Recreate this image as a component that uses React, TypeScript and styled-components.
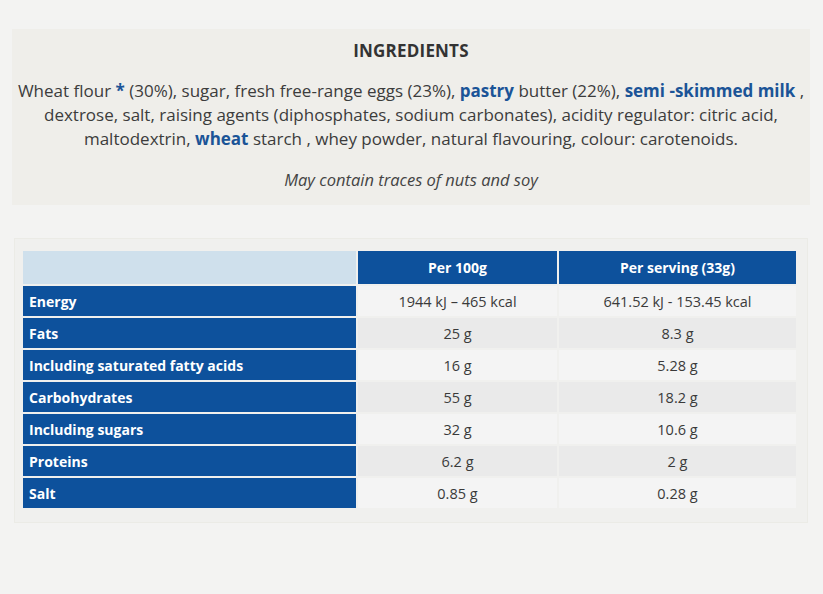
import React from "react";
import styled, { createGlobalStyle } from "styled-components";

const Global = createGlobalStyle`
  html, body { margin: 0; padding: 0; background: #f3f3f2; }
  body { font-family: "Open Sans", "Liberation Sans", sans-serif; color: #3a3a3a; }
`;

const Page = styled.div`
  width: 823px;
  height: 594px;
  padding: 29px 0 0 12px;
  box-sizing: border-box;
  display: flex;
  flex-direction: column;
  gap: 33px;
`;

const IngredientsBox = styled.section`
  width: 798px;
  height: 176px;
  box-sizing: border-box;
  background: #efeeea;
  padding: 10px 0 0;
  display: flex;
  flex-direction: column;
  align-items: center;
  text-align: center;
`;

const Title = styled.h2`
  margin: 0;
  font-size: 17px;
  font-weight: 700;
  color: #333;
  line-height: 24px;
  letter-spacing: 0.2px;
`;

const Paragraph = styled.p`
  margin: 16px 0 0;
  font-size: 17px;
  line-height: 24px;
  color: #3c3c3c;
  white-space: nowrap;
`;

const Allergen = styled.strong`
  color: #1b5497;
  font-weight: 700;
`;

const Traces = styled.p`
  margin: 17px 0 0;
  font-size: 16.5px;
  font-style: italic;
  line-height: 24px;
  color: #444;
`;

const TableBox = styled.section`
  margin-left: 2px;
  width: 794px;
  height: 285px;
  box-sizing: border-box;
  background: #f0f0ee;
  border: 1px solid #ebebe6;
  padding: 12px 0 0 8px;
`;

const Grid = styled.div`
  display: grid;
  grid-template-columns: 333px 199px 237px;
  grid-template-rows: 33px;
  grid-auto-rows: 30px;
  gap: 2px;
`;

const Cell = styled.div<{ $kind: "blank" | "head" | "label" | "value"; $alt?: boolean }>`
  display: flex;
  align-items: center;
  font-size: 14px;
  box-sizing: border-box;
  ${({ $kind, $alt }) => {
    switch ($kind) {
      case "blank":
        return `background: #cfe0ec;`;
      case "head":
        return `background: #0d519c; color: #fff; font-weight: 700; justify-content: center;`;
      case "label":
        return `background: #0d519c; color: #fff; font-weight: 700; padding-left: 6px;`;
      default:
        return `background: ${$alt ? "#eaeaea" : "#f4f4f4"}; color: #3a3a3a; justify-content: center; font-size: 14.5px;`;
    }
  }}
`;

const rows: [string, string, string][] = [
  ["Energy", "1944 kJ – 465 kcal", "641.52 kJ - 153.45 kcal"],
  ["Fats", "25 g", "8.3 g"],
  ["Including saturated fatty acids", "16 g", "5.28 g"],
  ["Carbohydrates", "55 g", "18.2 g"],
  ["Including sugars", "32 g", "10.6 g"],
  ["Proteins", "6.2 g", "2 g"],
  ["Salt", "0.85 g", "0.28 g"],
];

export default function App() {
  return (
    <>
      <Global />
      <Page>
        <IngredientsBox>
          <Title>INGREDIENTS</Title>
          <Paragraph>
            Wheat flour <Allergen>*</Allergen> (30%), sugar, fresh free-range eggs (23%), <Allergen>pastry</Allergen> butter (22%), <Allergen>semi -skimmed milk</Allergen> ,
            <br />
            dextrose, salt, raising agents (diphosphates, sodium carbonates), acidity regulator: citric acid,
            <br />
            maltodextrin, <Allergen>wheat</Allergen> starch , whey powder, natural flavouring, colour: carotenoids.
          </Paragraph>
          <Traces>May contain traces of nuts and soy</Traces>
        </IngredientsBox>
        <TableBox>
          <Grid>
            <Cell $kind="blank" />
            <Cell $kind="head">Per 100g</Cell>
            <Cell $kind="head">Per serving (33g)</Cell>
            {rows.map(([label, a, b], i) => (
              <React.Fragment key={label}>
                <Cell $kind="label">{label}</Cell>
                <Cell $kind="value" $alt={i % 2 === 1}>{a}</Cell>
                <Cell $kind="value" $alt={i % 2 === 1}>{b}</Cell>
              </React.Fragment>
            ))}
          </Grid>
        </TableBox>
      </Page>
    </>
  );
}
